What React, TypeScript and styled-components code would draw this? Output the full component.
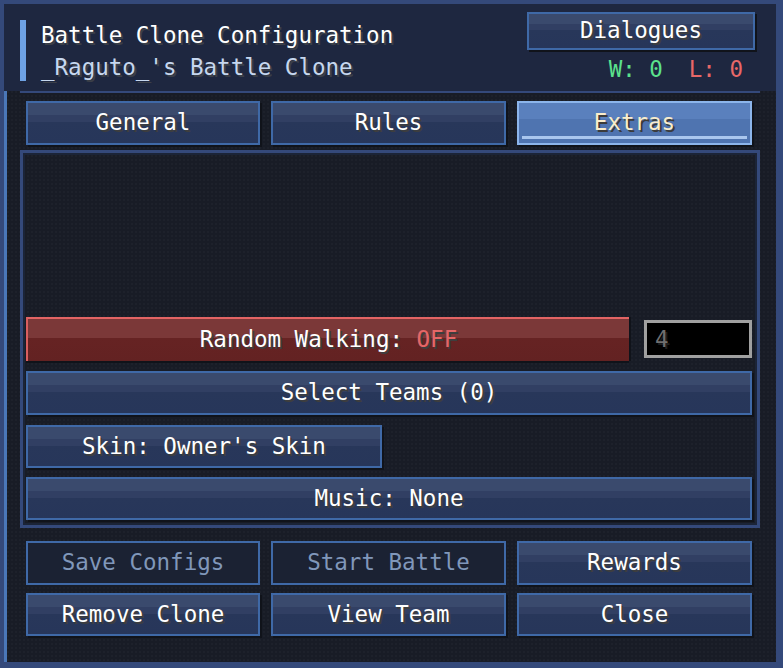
import React from 'react'
import styled, { createGlobalStyle, css } from 'styled-components'

const GlobalStyle = createGlobalStyle`
  html, body {
    margin: 0;
    padding: 0;
    background: #34497a;
  }
  * {
    box-sizing: border-box;
  }
`

const FONT = `"DejaVu Sans Mono", "Liberation Mono", monospace`

const Frame = styled.div`
  width: 783px;
  height: 668px;
  padding: 4px 7px 6px 4px;
  background: #34497a;
  display: flex;
  flex-direction: column;
  font-family: ${FONT};
  font-size: 22.5px;
  color: #ffffff;
`

const Header = styled.div`
  height: 87px;
  flex-shrink: 0;
  background: #1e2740;
  display: flex;
  align-items: flex-start;
  justify-content: space-between;
  padding: 8px 21px 0 16px;
`

const TitleBlock = styled.div`
  display: flex;
  align-items: stretch;
  gap: 15px;
  margin-top: 8px;
`

const Accent = styled.div`
  width: 6px;
  background: #6ea2e4;
`

const Titles = styled.div`
  display: flex;
  flex-direction: column;
  gap: 4px;
  line-height: 28px;
  padding-top: 1px;
`

const Title = styled.div<{ sub?: boolean }>`
  color: ${({ sub }) => (sub ? '#c6d7ef' : '#ffffff')};
  text-shadow: 2px 2px 0 #3b3f48;
  white-space: nowrap;
`

const HeaderRight = styled.div`
  display: flex;
  flex-direction: column;
  align-items: flex-end;
  gap: 6px;
`

const Score = styled.div`
  display: flex;
  gap: 26px;
  padding-right: 12px;
  line-height: 26px;
`

const ScoreItem = styled.span<{ color: string }>`
  color: ${({ color }) => color};
  white-space: pre;
`

const Body = styled.div`
  flex: 1;
  background:
    radial-gradient(circle at 1px 1px, rgba(255, 255, 255, 0.025) 1px, transparent 1.5px) 0 0 / 4px 4px,
    #181c26;
  border-left: 3px solid #4a77b8;
  display: flex;
  flex-direction: column;
  padding: 0 16px 0 13px;
`

const Divider = styled.div`
  height: 2px;
  width: 740px;
  background: #34497a;
`

const ButtonGrid = styled.div<{ top?: number }>`
  display: grid;
  grid-template-columns: 234px 235px 235px;
  column-gap: 11px;
  row-gap: 8px;
  margin: ${({ top }) => top ?? 0}px 6px 0;
`

type Variant = 'normal' | 'active' | 'danger' | 'disabled'

const Btn = styled.div<{ variant?: Variant; h?: number; w?: string }>`
  position: relative;
  height: ${({ h }) => h ?? 44}px;
  width: ${({ w }) => w ?? 'auto'};
  flex-shrink: 0;
  display: flex;
  align-items: center;
  justify-content: center;
  white-space: pre;
  line-height: 1;
  padding-bottom: 1px;
  border: 2px solid #3f69a7;
  box-shadow: 2px 2px 0 #10131a;
  background: linear-gradient(
    #3a4a6d 0%,
    #3a4a6d 30%,
    #313f63 30%,
    #313f63 48%,
    #28375a 48%,
    #27365a 100%
  );
  color: #ffffff;
  text-shadow: 2px 2px 0 #3e3e3e;

  ${({ variant }) =>
    variant === 'active' &&
    css`
      border-color: #8cb5eb;
      background: linear-gradient(#5a80bd 0%, #5a80bd 40%, #4f74b0 40%, #4f74b0 100%);
      color: #f9edcc;
      text-shadow: 2px 2px 0 #3b3b3b;

      &::after {
        content: '';
        position: absolute;
        left: 3px;
        right: 3px;
        bottom: 4px;
        height: 3px;
        background: #a9c6ee;
      }
    `}

  ${({ variant }) =>
    variant === 'danger' &&
    css`
      border: none;
      border-top: 2px solid #e26464;
      border-left: 2px solid #d95e5e;
      background: linear-gradient(#7b3838 0%, #7b3838 46%, #662323 46%, #632222 100%);
      box-shadow: 0 2px 0 #10131a, 2px 0 0 #10131a;
    `}

  ${({ variant }) =>
    variant === 'disabled' &&
    css`
      background: #1b2233;
      color: #8097ba;
      text-shadow: none;
      box-shadow: none;
    `}
`

const Off = styled.span`
  color: #e56767;
`

const Panel = styled.div`
  margin-top: 5px;
  height: 378px;
  border: 3px solid #34497a;
  box-shadow: inset 0 0 0 2px #1b2437;
  display: flex;
  flex-direction: column;
  justify-content: flex-end;
  gap: 10px;
  padding: 0 5px 5px 3px;
`

const Row = styled.div`
  display: flex;
  align-items: center;
  gap: 15px;
`

const NumberField = styled.div`
  width: 108px;
  height: 38px;
  border: 3px solid #a0a0a0;
  background: #000000;
  color: #6f6f6f;
  display: flex;
  align-items: center;
  padding: 0 0 1px 8px;
  text-shadow: 2px 2px 0 #1e1e1e;
`

const SkinButton = styled(Btn)`
  margin-bottom: -1px;
`

export default function App() {
  return (
    <>
      <GlobalStyle />
      <Frame>
        <Header>
          <TitleBlock>
            <Accent />
            <Titles>
              <Title>Battle Clone Configuration</Title>
              <Title sub>_Raguto_'s Battle Clone</Title>
            </Titles>
          </TitleBlock>
          <HeaderRight>
            <Btn h={38} w="228px">Dialogues</Btn>
            <Score>
              <ScoreItem color="#5be28c">W: 0</ScoreItem>
              <ScoreItem color="#e86868">L: 0</ScoreItem>
            </Score>
          </HeaderRight>
        </Header>
        <Body>
          <Divider />
          <ButtonGrid top={8}>
            <Btn>General</Btn>
            <Btn>Rules</Btn>
            <Btn variant="active">Extras</Btn>
          </ButtonGrid>
          <Panel>
            <Row>
              <Btn variant="danger" w="603px">
                Random Walking: <Off>OFF</Off>
              </Btn>
              <NumberField>4</NumberField>
            </Row>
            <Btn>Select Teams (0)</Btn>
            <SkinButton w="356px" h={43}>Skin: Owner's Skin</SkinButton>
            <Btn h={43}>Music: None</Btn>
          </Panel>
          <ButtonGrid top={13}>
            <Btn variant="disabled">Save Configs</Btn>
            <Btn variant="disabled">Start Battle</Btn>
            <Btn>Rewards</Btn>
            <Btn h={43}>Remove Clone</Btn>
            <Btn h={43}>View Team</Btn>
            <Btn h={43}>Close</Btn>
          </ButtonGrid>
        </Body>
      </Frame>
    </>
  )
}
